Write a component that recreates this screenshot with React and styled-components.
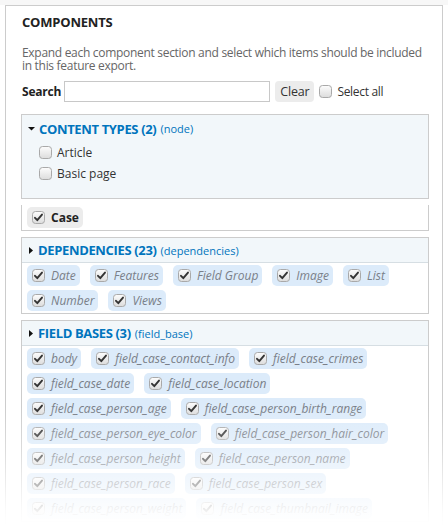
import React from "react";
import styled, { createGlobalStyle } from "styled-components";

const Global = createGlobalStyle`
  html, body { margin: 0; padding: 0; background: #fff; }
  body { font-family: "Open Sans", "DejaVu Sans", sans-serif; font-size: 12px; color: #333; }
  * { box-sizing: border-box; }
`;

const Page = styled.div`
  position: relative;
  width: 448px;
  height: 531px;
  overflow: hidden;
`;

const TopStrip = styled.div`
  height: 5px;
  background: #f7f7f7;
`;

const Outer = styled.div`
  margin-left: 5px;
  width: 438px;
  min-height: 600px;
  border: 1px solid #cccccc;
  padding: 8px 13px 0 15px;
`;

const Title = styled.h2`
  margin: 0 0 0 1px;
  font-size: 13px;
  line-height: 16px;
  font-weight: 700;
  color: #222;
  letter-spacing: -0.2px;
  text-transform: uppercase;
`;

const Description = styled.p`
  margin: 16px 0 0 1px;
  font-size: 12px;
  line-height: 13px;
  letter-spacing: -0.3px;
  color: #666;
`;

const SearchRow = styled.div`
  display: flex;
  align-items: center;
  margin: 9px 0 0 1px;
  height: 21px;
`;

const Label = styled.label`
  font-weight: 700;
  font-size: 12px;
  letter-spacing: -0.2px;
  color: #222;
  margin-right: 3px;
`;

const Input = styled.input`
  width: 206px;
  height: 21px;
  border: 1px solid #c8c8c8;
  padding: 0 4px;
  font: inherit;
`;

const ClearButton = styled.button`
  margin-left: 5px;
  height: 21px;
  padding: 0 5px;
  border: none;
  border-radius: 4px;
  background: #ececec;
  font: inherit;
  font-size: 12.5px;
  letter-spacing: -0.2px;
  color: #333;
`;

const BoxSvg = styled.svg`
  flex: none;
  display: block;
`;

function Check({ checked }) {
  return (
    <BoxSvg width="13" height="13" viewBox="0 0 13 13">
      <defs>
        <linearGradient id="cbg" x1="0" y1="0" x2="0" y2="1">
          <stop offset="0" stopColor="#fdfdfd" />
          <stop offset="1" stopColor="#dcdcdc" />
        </linearGradient>
      </defs>
      <rect x="0.5" y="0.5" width="12" height="12" rx="3" fill="url(#cbg)" stroke="#a9a9a9" />
      {checked && (
        <path d="M3 6.8 L5.3 9.2 L10 3.6" fill="none" stroke="#333" strokeWidth="1.9" strokeLinecap="round" strokeLinejoin="round" />
      )}
    </BoxSvg>
  );
}

const SelectAll = styled.label`
  display: flex;
  align-items: center;
  gap: 5px;
  margin-left: 5px;
  font-size: 12px;
  letter-spacing: -0.3px;
  color: #333;
`;

const Fieldset = styled.section`
  margin-top: ${(p) => p.$mt}px;
  border: 1px solid #cccccc;
  border-top: ${(p) => (p.$noTop ? "none" : "1px solid #cccccc")};
  background: ${(p) => (p.$tint ? "#f2f7fa" : "#fff")};
`;

const Legend = styled.div`
  display: flex;
  align-items: center;
  height: ${(p) => p.$h}px;
  padding-left: 6px;
  background: #f2f7fa;
  border-bottom: ${(p) => (p.$line ? "1px solid #d6dee3" : "none")};
  color: #0074bd;
`;

const LegendTitle = styled.span`
  font-weight: 700;
  font-size: 13px;
  letter-spacing: -0.35px;
  margin-left: 4px;
`;

const LegendSub = styled.span`
  font-size: 11px;
  margin-left: 4px;
`;

const Tri = styled.svg`
  flex: none;
  display: block;
`;

const ListCol = styled.div`
  display: flex;
  flex-direction: column;
  gap: 8px;
  padding: 4px 0 18px 17px;
`;

const Item = styled.label`
  display: flex;
  align-items: center;
  gap: 5px;
  font-size: 12px;
  line-height: 13px;
  color: #333;
`;

const ChipWrap = styled.div`
  display: flex;
  flex-wrap: wrap;
  gap: 4px 10px;
  padding: 2px 5px 2px 5px;
`;

const Chip = styled.label`
  display: inline-flex;
  align-items: center;
  gap: 6px;
  height: 21px;
  padding: 0 4px 0 5px;
  border-radius: 5px;
  background: ${(p) => (p.$plain ? "#ececec" : "#dcebfa")};
  font-size: 12px;
  font-style: ${(p) => (p.$plain ? "normal" : "italic")};
  font-weight: ${(p) => (p.$plain ? 700 : 400)};
  color: ${(p) => (p.$plain ? "#222" : "#7a7f88")};
`;

const Fade = styled.div`
  position: absolute;
  left: 0;
  right: 0;
  bottom: 0;
  height: 125px;
  pointer-events: none;
  background: linear-gradient(to bottom, rgba(255,255,255,0) 0%, rgba(255,255,255,0.3) 35%, rgba(255,255,255,0.72) 68%, rgba(255,255,255,0.92) 84%, #fff 96%);
`;

const deps = ["Date", "Features", "Field Group", "Image", "List", "Number", "Views"];
const bases = [
  "body",
  "field_case_contact_info",
  "field_case_crimes",
  "field_case_date",
  "field_case_location",
  "field_case_person_age",
  "field_case_person_birth_range",
  "field_case_person_eye_color",
  "field_case_person_hair_color",
  "field_case_person_height",
  "field_case_person_name",
  "field_case_person_race",
  "field_case_person_sex",
  "field_case_person_weight",
  "field_case_thumbnail_image",
];

function Down() {
  return (
    <Tri width="7" height="5" viewBox="0 0 7 5">
      <path d="M0 1 L7 1 L3.5 4.5 Z" fill="#111" />
    </Tri>
  );
}
function Right() {
  return (
    <Tri width="6" height="9" viewBox="0 0 6 9">
      <path d="M1 1 L5 4.5 L1 8 Z" fill="#111" />
    </Tri>
  );
}

export default function App() {
  return (
    <Page>
      <Global />
      <TopStrip />
      <Outer>
        <Title>Components</Title>
        <Description>
          Expand each component section and select which items should be included in this feature export.
        </Description>
        <SearchRow>
          <Label>Search</Label>
          <Input type="text" />
          <ClearButton>Clear</ClearButton>
          <SelectAll>
            <Check />
            Select all
          </SelectAll>
        </SearchRow>

        <Fieldset $mt={12} $tint>
          <Legend $h={27}>
            <Down />
            <LegendTitle>CONTENT TYPES (2)</LegendTitle>
            <LegendSub>(node)</LegendSub>
          </Legend>
          <ListCol>
            <Item><Check />Article</Item>
            <Item><Check />Basic page</Item>
          </ListCol>
        </Fieldset>

        <Fieldset $mt={6} $noTop>
          <ChipWrap>
            <Chip $plain><Check checked />Case</Chip>
          </ChipWrap>
        </Fieldset>

        <Fieldset $mt={6}>
          <Legend $h={25} $line>
            <Right />
            <LegendTitle>DEPENDENCIES (23)</LegendTitle>
            <LegendSub>(dependencies)</LegendSub>
          </Legend>
          <ChipWrap>
            {deps.map((d) => (
              <Chip key={d}><Check checked />{d}</Chip>
            ))}
          </ChipWrap>
        </Fieldset>

        <Fieldset $mt={6}>
          <Legend $h={25} $line>
            <Right />
            <LegendTitle>FIELD BASES (3)</LegendTitle>
            <LegendSub>(field_base)</LegendSub>
          </Legend>
          <ChipWrap>
            {bases.map((d) => (
              <Chip key={d}><Check checked />{d}</Chip>
            ))}
          </ChipWrap>
        </Fieldset>
      </Outer>
      <Fade />
    </Page>
  );
}
